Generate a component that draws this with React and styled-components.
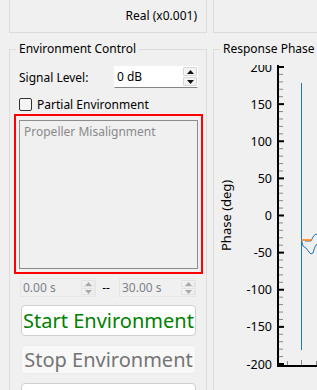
import React from 'react';
import styled, { createGlobalStyle } from 'styled-components';

const GlobalStyle = createGlobalStyle`
  html, body {
    margin: 0;
    padding: 0;
    background: #f0f0f0;
  }
  body {
    font-family: "Noto Sans", "Open Sans", sans-serif;
    font-size: 12px;
    color: #000;
  }
  #root {
    width: 317px;
    height: 390px;
    overflow: hidden;
  }
`;

const Page = styled.div`
  display: flex;
  flex-direction: column;
  padding-left: 9px;
  width: 520px;
`;

const Row = styled.div`
  display: flex;
  gap: 6px;
  align-items: flex-start;
`;

const TopBox = styled.div`
  box-sizing: border-box;
  width: ${({ w }) => w}px;
  height: 33px;
  border: 1px solid #dcdcdc;
  border-top: none;
  padding: 8px 9px 0 0;
  line-height: 16px;
  text-align: right;
`;

const Group = styled.fieldset`
  box-sizing: border-box;
  width: ${({ w }) => w}px;
  margin: 8px 0 0;
  padding: 0 ${({ pr }) => pr || 0}px 0 ${({ pl }) => pl || 0}px;
  border: 1px solid #dcdcdc;
  min-width: 0;
  height: ${({ h }) => h}px;
`;

const Legend = styled.legend`
  padding: 0 3px;
  margin-left: ${({ ml }) => ml}px;
  line-height: 16px;
  font-size: 12px;
`;

const Column = styled.div`
  display: flex;
  flex-direction: column;
`;

const SignalRow = styled.div`
  display: flex;
  align-items: center;
  justify-content: space-between;
  margin-top: 9px;
  padding: 0 6px 0 5px;
  height: 22px;
`;

const SpinBox = styled.div`
  box-sizing: border-box;
  display: flex;
  width: ${({ w }) => w}px;
  height: ${({ h }) => h}px;
  background: ${({ disabled }) => (disabled ? '#f0f0f0' : '#fff')};
  border: 1px solid ${({ disabled }) => (disabled ? '#e6e6e6' : 'transparent')};
  border-bottom: 1px solid ${({ disabled }) => (disabled ? '#e6e6e6' : '#858585')};
  border-top: ${({ disabled }) => (disabled ? '1px solid #e6e6e6' : 'none')};
`;

const SpinText = styled.div`
  flex: 1;
  display: flex;
  align-items: center;
  padding-left: 2px;
  color: ${({ disabled }) => (disabled ? '#7d828a' : '#000')};
`;

const SpinButtons = styled.div`
  display: flex;
  flex-direction: column;
  width: 14px;
  gap: 1px;
  padding: 1px 0;
`;

const SpinButton = styled.div`
  flex: 1;
  display: flex;
  align-items: center;
  justify-content: center;
  background: ${({ disabled }) => (disabled ? '#f0f0f0' : '#f3f3f3')};
  border: 1px solid ${({ disabled }) => (disabled ? '#e3e3e3' : '#d6d6d6')};
  border-radius: 1px;
`;

const CheckRow = styled.label`
  display: flex;
  align-items: center;
  gap: 5px;
  height: 16px;
  margin-top: 8px;
  padding-left: 5px;
`;

const CheckBox = styled.span`
  box-sizing: border-box;
  width: 13px;
  height: 13px;
  border: 1px solid #333;
  border-radius: 2px;
  background: #f4f4f4;
`;

const Highlight = styled.div`
  box-sizing: border-box;
  width: 189px;
  height: 160px;
  margin-top: 2px;
  border: 2px solid #ff0000;
  padding: 4px 3px 3px;
`;

const ListBox = styled.div`
  box-sizing: border-box;
  height: 100%;
  border: 1px solid #8c8c8c;
  padding: 3px 4px;
  color: #8a8a8a;
  line-height: 16px;
`;

const TimeRow = styled.div`
  display: grid;
  grid-template-columns: 76px 23px 77px;
  align-items: center;
  margin: 4px 0 0 6px;
  height: 19px;
`;

const Dash = styled.span`
  text-align: center;
  padding-right: 3px;
`;

const Button = styled.div`
  box-sizing: border-box;
  width: 175px;
  height: ${({ h }) => h}px;
  margin: ${({ mt }) => mt}px 0 0 7px;
  display: flex;
  align-items: center;
  justify-content: center;
  font-size: 20px;
  border-radius: 4px;
  background: ${({ variant }) => (variant === 'muted' ? '#f8f8f8' : '#fff')};
  border: 1px solid ${({ variant }) => (variant === 'muted' ? '#ececec' : '#cfcfcf')};
  color: ${({ variant }) =>
    variant === 'start' ? '#008000' : variant === 'muted' ? '#747474' : '#000'};
`;

const ChartRow = styled.div`
  display: flex;
  align-items: flex-start;
  margin-top: 8px;
`;

const AxisTitle = styled.div`
  box-sizing: border-box;
  flex: none;
  width: 30px;
  height: 300px;
  display: flex;
  align-items: center;
  justify-content: center;
  padding-left: 7px;
  writing-mode: vertical-rl;
  transform: rotate(180deg);
  font-size: 13px;
  line-height: 16px;
`;

const Arrow = ({ up, color }) => (
  <svg width="7" height="4" viewBox="0 0 7 4">
    <polygon points={up ? '0,4 7,4 3.5,0' : '0,0 7,0 3.5,4'} fill={color} />
  </svg>
);

const Spin = ({ value, w, h, disabled }) => (
  <SpinBox w={w} h={h} disabled={disabled}>
    <SpinText disabled={disabled}>{value}</SpinText>
    <SpinButtons>
      <SpinButton disabled={disabled}>
        <Arrow up color={disabled ? '#a8a8a8' : '#111'} />
      </SpinButton>
      <SpinButton disabled={disabled}>
        <Arrow color={disabled ? '#a8a8a8' : '#111'} />
      </SpinButton>
    </SpinButtons>
  </SpinBox>
);

const yOf = (v) => 215.5 - v * 0.7425;

const PhaseChart = () => {
  const majors = [200, 150, 100, 50, 0, -50, -100, -150, -200];
  const minors = [];
  for (let v = -200; v <= 200; v += 10) {
    if (v % 50 !== 0) minors.push(v);
  }
  return (
    <svg width="90" height="315" viewBox="244 65 90 315" style={{ flex: 'none' }}>
      {minors.map((v) => (
        <rect key={v} x="279" y={yOf(v) - 0.5} width="4" height="1" fill="#8a8a8a" />
      ))}
      {majors.map((v) => (
        <g key={v}>
          <rect x="279" y={yOf(v) - 1} width="5" height="2" fill="#000" />
          <text
            x="272"
            y={yOf(v) + 4.5}
            textAnchor="end"
            fontSize="12.5"
            fontFamily='"Noto Sans", sans-serif'
            fill="#000"
          >
            {v}
          </text>
        </g>
      ))}
      <rect x="277" y="65" width="2" height="302" fill="#000" />
      <rect x="277" y="365" width="60" height="2" fill="#000" />
      <rect x="287" y="361" width="1" height="4" fill="#8a8a8a" />
      <rect x="301" y="360" width="1" height="5" fill="#8a8a8a" />
      <rect x="316" y="361" width="1" height="4" fill="#8a8a8a" />
      <line x1="301.5" y1="83" x2="301.5" y2="350" stroke="#1f77b4" strokeWidth="1" />
      <path
        d="M301.5 240 L303 246 L306 248 L309 252 L311 254 L313 253 L314.5 248 L316 245 L318 244"
        fill="none"
        stroke="#1f77b4"
        strokeWidth="1"
      />
      <path
        d="M305 241 L311 241 L313 237 L315 234.5 L318 234"
        fill="none"
        stroke="#1f77b4"
        strokeWidth="1"
      />
      <path d="M301.5 240 L312 240" fill="none" stroke="#ff7f0e" strokeWidth="1.5" />
    </svg>
  );
};

const App = () => (
  <>
    <GlobalStyle />
    <Page>
      <Row>
        <TopBox w={198}>Real (x0.001)</TopBox>
        <TopBox w={200} />
      </Row>
      <Row>
        <Group w={198} h={420} pl={4} pr={2}>
          <Legend ml={2}>Environment Control</Legend>
          <Column>
            <SignalRow>
              <span>Signal Level:</span>
              <Spin value="0 dB" w={84} h={22} />
            </SignalRow>
            <CheckRow>
              <CheckBox />
              <span>Partial Environment</span>
            </CheckRow>
            <Highlight>
              <ListBox>Propeller Misalignment</ListBox>
            </Highlight>
            <TimeRow>
              <Spin value="0.00 s" w={76} h={19} disabled />
              <Dash>--</Dash>
              <Spin value="30.00 s" w={77} h={19} disabled />
            </TimeRow>
            <Button variant="start" h={31} mt={8}>Start Environment</Button>
            <Button variant="muted" h={29} mt={9}>Stop Environment</Button>
            <Button h={29} mt={9} />
          </Column>
        </Group>
        <Group w={200} h={420}>
          <Legend ml={6}>Response Phase</Legend>
          <ChartRow>
            <AxisTitle>Phase (deg)</AxisTitle>
            <PhaseChart />
          </ChartRow>
        </Group>
      </Row>
    </Page>
  </>
);

export default App;
